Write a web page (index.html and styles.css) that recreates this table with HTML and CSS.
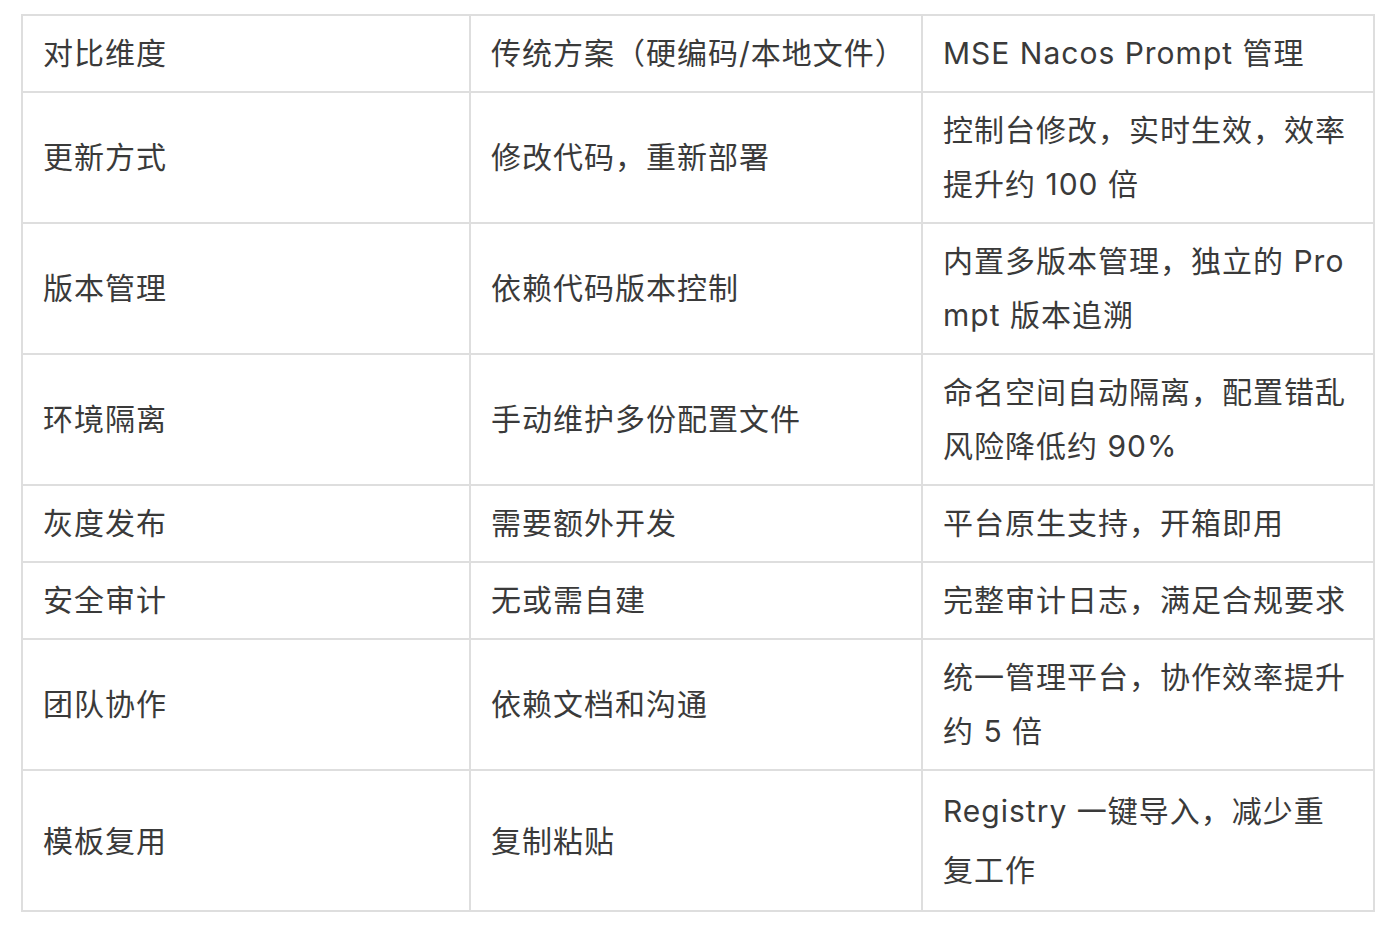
FILE: index.html
```html
<!DOCTYPE html>
<html lang="zh">
<head>
<meta charset="utf-8">
<link rel="stylesheet" href="styles.css">
</head>
<body>
<table class="cmp">
  <colgroup><col class="c1"><col class="c2"><col class="c3"></colgroup>
  <tr><td>对比维度</td><td>传统方案（硬编码/本地文件）</td><td>MSE Nacos Prompt 管理</td></tr>
  <tr><td>更新方式</td><td>修改代码，重新部署</td><td>控制台修改，实时生效，效率提升约 100 倍</td></tr>
  <tr><td>版本管理</td><td>依赖代码版本控制</td><td>内置多版本管理，独立的 Prompt 版本追溯</td></tr>
  <tr><td>环境隔离</td><td>手动维护多份配置文件</td><td>命名空间自动隔离，配置错乱风险降低约 90%</td></tr>
  <tr><td>灰度发布</td><td>需要额外开发</td><td>平台原生支持，开箱即用</td></tr>
  <tr><td>安全审计</td><td>无或需自建</td><td>完整审计日志，满足合规要求</td></tr>
  <tr><td>团队协作</td><td>依赖文档和沟通</td><td>统一管理平台，协作效率提升约 5 倍</td></tr>
  <tr class="last"><td>模板复用</td><td>复制粘贴</td><td>Registry 一键导入，减少重复工作</td></tr>
</table>
</body>
</html>
```
FILE: styles.css
```css
html, body { margin: 0; background: #fff; }
body { padding: 14px 20px 0 21px; }
.cmp {
  border-collapse: collapse;
  table-layout: fixed;
  width: 1354px;
  font-family: Inter, "Noto Sans CJK SC", sans-serif;
  font-size: 30px;
  line-height: 54px;
  letter-spacing: 1px;
  color: #3a3a3a;
}
.c1 { width: 448px; }
.c2 { width: 452px; }
.c3 { width: 452px; }
.cmp td {
  border: 2px solid #dedede;
  padding: 10px 20px 11px 20px;
  vertical-align: middle;
  word-break: break-all;
}
.cmp .last td {
  line-height: 59px;
  padding-top: 11px;
  padding-bottom: 10px;
}
```
